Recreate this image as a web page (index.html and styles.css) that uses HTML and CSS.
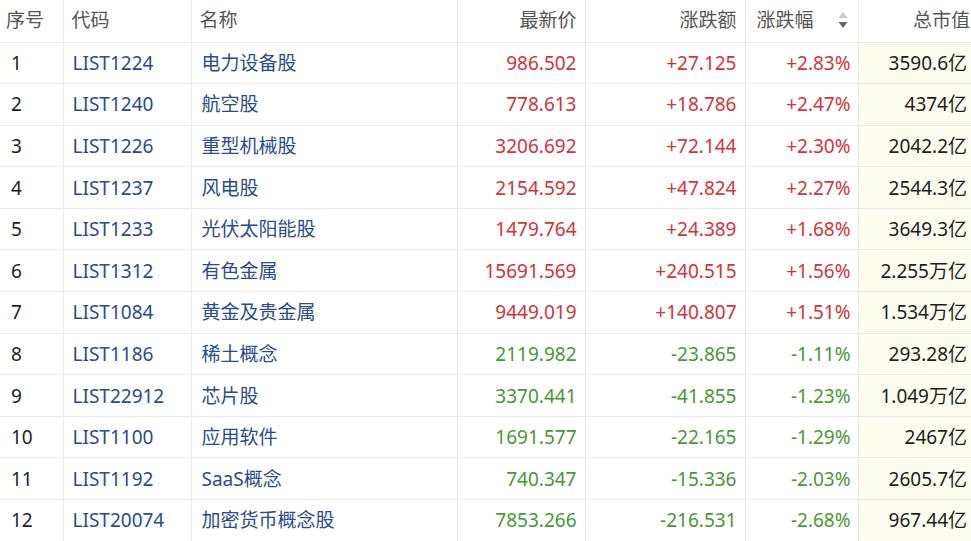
FILE: index.html
```html
<!DOCTYPE html>
<html lang="zh">
<head>
<meta charset="utf-8">
<link rel="stylesheet" href="styles.css">
</head>
<body>
<table class="quotes">
  <colgroup>
    <col class="c-idx"><col class="c-code"><col class="c-name"><col class="c-price"><col class="c-chg"><col class="c-pct"><col class="c-cap">
  </colgroup>
  <thead>
    <tr>
      <th class="left">序号</th>
      <th class="left">代码</th>
      <th class="left">名称</th>
      <th class="right">最新价</th>
      <th class="right">涨跌额</th>
      <th class="sortable"><span class="sort-wrap"><span>涨跌幅</span><span class="sort-icon"><svg width="10" height="18" viewBox="0 0 10 18"><path d="M5 1 L9.5 7 L0.5 7 Z" fill="#c8c8c8"/><path d="M5 17 L9.5 11 L0.5 11 Z" fill="#666"/></svg></span></span></th>
      <th class="right cap-h">总市值</th>
    </tr>
  </thead>
  <tbody>
    <tr><td class="idx">1</td><td class="code">LIST1224</td><td class="name">电力设备股</td><td class="num up">986.502</td><td class="num up">+27.125</td><td class="num up pct">+2.83%</td><td class="num cap">3590.6亿</td></tr>
    <tr><td class="idx">2</td><td class="code">LIST1240</td><td class="name">航空股</td><td class="num up">778.613</td><td class="num up">+18.786</td><td class="num up pct">+2.47%</td><td class="num cap">4374亿</td></tr>
    <tr><td class="idx">3</td><td class="code">LIST1226</td><td class="name">重型机械股</td><td class="num up">3206.692</td><td class="num up">+72.144</td><td class="num up pct">+2.30%</td><td class="num cap">2042.2亿</td></tr>
    <tr><td class="idx">4</td><td class="code">LIST1237</td><td class="name">风电股</td><td class="num up">2154.592</td><td class="num up">+47.824</td><td class="num up pct">+2.27%</td><td class="num cap">2544.3亿</td></tr>
    <tr><td class="idx">5</td><td class="code">LIST1233</td><td class="name">光伏太阳能股</td><td class="num up">1479.764</td><td class="num up">+24.389</td><td class="num up pct">+1.68%</td><td class="num cap">3649.3亿</td></tr>
    <tr><td class="idx">6</td><td class="code">LIST1312</td><td class="name">有色金属</td><td class="num up">15691.569</td><td class="num up">+240.515</td><td class="num up pct">+1.56%</td><td class="num cap">2.255万亿</td></tr>
    <tr><td class="idx">7</td><td class="code">LIST1084</td><td class="name">黄金及贵金属</td><td class="num up">9449.019</td><td class="num up">+140.807</td><td class="num up pct">+1.51%</td><td class="num cap">1.534万亿</td></tr>
    <tr><td class="idx">8</td><td class="code">LIST1186</td><td class="name">稀土概念</td><td class="num down">2119.982</td><td class="num down">-23.865</td><td class="num down pct">-1.11%</td><td class="num cap">293.28亿</td></tr>
    <tr><td class="idx">9</td><td class="code">LIST22912</td><td class="name">芯片股</td><td class="num down">3370.441</td><td class="num down">-41.855</td><td class="num down pct">-1.23%</td><td class="num cap">1.049万亿</td></tr>
    <tr><td class="idx">10</td><td class="code">LIST1100</td><td class="name">应用软件</td><td class="num down">1691.577</td><td class="num down">-22.165</td><td class="num down pct">-1.29%</td><td class="num cap">2467亿</td></tr>
    <tr><td class="idx">11</td><td class="code">LIST1192</td><td class="name">SaaS概念</td><td class="num down">740.347</td><td class="num down">-15.336</td><td class="num down pct">-2.03%</td><td class="num cap">2605.7亿</td></tr>
    <tr><td class="idx">12</td><td class="code">LIST20074</td><td class="name">加密货币概念股</td><td class="num down">7853.266</td><td class="num down">-216.531</td><td class="num down pct">-2.68%</td><td class="num cap">967.44亿</td></tr>
  </tbody>
</table>
</body>
</html>
```
FILE: styles.css
```css
html, body {
  margin: 0;
  padding: 0;
  background: #ffffff;
  overflow: hidden;
}
body {
  font-family: "Noto Sans", "Noto Sans CJK SC", sans-serif;
  font-size: 19px;
  color: #222;
}
.quotes {
  border-collapse: collapse;
  table-layout: fixed;
  width: 971px;
}
.c-idx { width: 63px; }
.c-code { width: 128px; }
.c-name { width: 266px; }
.c-price { width: 128px; }
.c-chg { width: 160px; }
.c-pct { width: 113px; }
.c-cap { width: 113px; }

.quotes th, .quotes td {
  border: 1px solid #e9e9e9;
  padding: 0 8px;
  white-space: nowrap;
  overflow: hidden;
  line-height: 22px;
}
.quotes tr:first-child th { border-top: none; }
.quotes th:first-child, .quotes td:first-child { border-left: none; }
.quotes th:last-child, .quotes td:last-child { border-right: none; }
.quotes thead tr { height: 42px; }
.quotes tbody tr { height: 41.6px; }
.quotes th {
  font-weight: normal;
  color: #555;
  vertical-align: middle;
  padding-bottom: 2px;
}
.quotes th.left { text-align: left; }
.quotes th.right { text-align: right; }
.quotes th:first-child { padding-left: 6px; }
.quotes th.cap-h { padding-right: 1px; }
.sort-wrap {
  display: flex;
  align-items: center;
  justify-content: space-between;
  padding-left: 3px;
  padding-right: 2px;
}
.sort-icon { display: flex; align-items: center; }

.quotes td.idx { padding-left: 11px; color: #1e1e1e; }
.quotes td.code { padding-left: 9px; color: #284c8c; }
.quotes td.name { padding-left: 10px; color: #284c8c; }
.quotes td.num { text-align: right; }
.quotes td.pct { padding-right: 7px; }
.quotes td.up { color: #d3333a; }
.quotes td.down { color: #489835; }
.quotes td.cap { background: #fcfcef; color: #1e1e1e; padding-right: 4px; }
```
